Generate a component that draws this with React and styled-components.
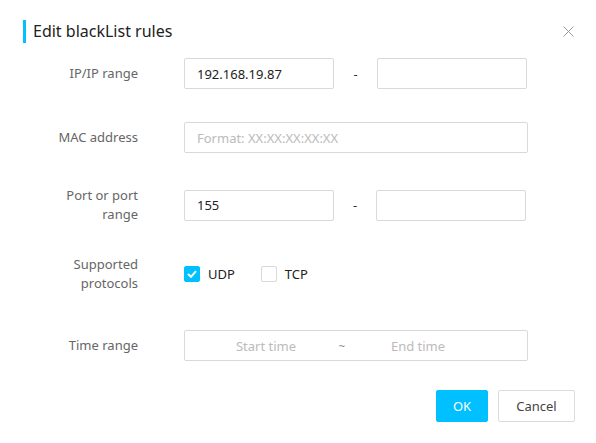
import React from "react";
import styled, { createGlobalStyle } from "styled-components";

const Global = createGlobalStyle`
  html, body { margin: 0; padding: 0; background: #fff; }
  body { font-family: "Noto Sans", "Open Sans", Arial, sans-serif; }
  * { box-sizing: border-box; }
`;

const Dialog = styled.div`
  width: 596px;
  height: 443px;
  background: #fff;
  position: relative;
  padding-top: 20px;
`;

const Header = styled.div`
  display: flex;
  align-items: center;
  justify-content: space-between;
  padding: 0 22px 0 23px;
  height: 23px;
`;

const Title = styled.h2`
  margin: 0;
  border-left: 3px solid #00c0ff;
  padding-left: 7px;
  font-size: 16px;
  font-weight: normal;
  line-height: 23px;
  color: #222;
`;

const Close = styled.button`
  border: 0;
  background: none;
  padding: 0;
  width: 12px;
  height: 12px;
  display: flex;
  align-items: center;
  justify-content: center;
  cursor: pointer;
`;

const Form = styled.div`
  display: flex;
  flex-direction: column;
`;

const Row = styled.div`
  display: grid;
  grid-template-columns: 138px 1fr;
  column-gap: 46px;
  align-items: center;
  height: 31px;
  margin-top: ${(p) => p.$top}px;
`;

const Label = styled.div`
  text-align: right;
  font-size: 13px;
  line-height: 19px;
  color: #666;
`;

const Field = styled.div`
  display: flex;
  align-items: center;
`;

const Input = styled.input`
  width: ${(p) => p.$w}px;
  height: 31px;
  border: 1px solid #d9d9d9;
  border-radius: 2px;
  padding: 0 12px;
  font-family: inherit;
  font-size: 13px;
  color: #222;
  outline: none;
  &::placeholder { color: #bbb; }
`;

const Dash = styled.span`
  width: ${(p) => p.$w}px;
  text-align: center;
  font-size: 13px;
  color: #333;
`;

const Check = styled.span`
  width: 16px;
  height: 16px;
  border-radius: 2px;
  display: inline-flex;
  align-items: center;
  justify-content: center;
  background: ${(p) => (p.$on ? "#00c0ff" : "#fff")};
  border: 1px solid ${(p) => (p.$on ? "#00c0ff" : "#d9d9d9")};
  margin-right: 8px;
`;

const CheckLabel = styled.label`
  display: inline-flex;
  align-items: center;
  font-size: 13px;
  color: #222;
  margin-right: 26px;
`;

const TimeBox = styled.div`
  width: 344px;
  height: 31px;
  border: 1px solid #d9d9d9;
  border-radius: 2px;
  display: flex;
  align-items: center;
  padding: 0 9px;
`;

const TimeInput = styled.input`
  width: 144px;
  border: 0;
  outline: none;
  text-align: center;
  font-family: inherit;
  font-size: 13px;
  color: #222;
  background: transparent;
  &::placeholder { color: #bbb; }
`;

const Tilde = styled.span`
  width: 8px;
  text-align: center;
  font-size: 11px;
  color: #888;
`;

const Footer = styled.div`
  display: flex;
  justify-content: flex-end;
  gap: 10px;
  padding-right: 21px;
  margin-top: 29px;
`;

const Button = styled.button`
  height: 32px;
  min-width: ${(p) => p.$w}px;
  border-radius: 2px;
  font-family: inherit;
  font-size: 13px;
  cursor: pointer;
  background: ${(p) => (p.$primary ? "#00c0ff" : "#fff")};
  color: ${(p) => (p.$primary ? "#fff" : "#444")};
  border: 1px solid ${(p) => (p.$primary ? "#00c0ff" : "#dcdcdc")};
`;

export default function App() {
  return (
    <>
      <Global />
      <Dialog>
        <Header>
          <Title>Edit blackList rules</Title>
          <Close aria-label="close">
            <svg width="11" height="11" viewBox="0 0 11 11">
              <path d="M0.5 0.5 L10.5 10.5 M10.5 0.5 L0.5 10.5" stroke="#999" strokeWidth="1" fill="none" />
            </svg>
          </Close>
        </Header>
        <Form>
          <Row $top={15}>
            <Label>IP/IP range</Label>
            <Field>
              <Input $w={150} defaultValue="192.168.19.87" />
              <Dash $w={43}>-</Dash>
              <Input $w={150} />
            </Field>
          </Row>
          <Row $top={33}>
            <Label>MAC address</Label>
            <Field>
              <Input $w={344} placeholder="Format: XX:XX:XX:XX:XX" />
            </Field>
          </Row>
          <Row $top={33}>
            <Label>Port or port<br />range</Label>
            <Field>
              <Input $w={150} defaultValue="155" />
              <Dash $w={42}>-</Dash>
              <Input $w={150} />
            </Field>
          </Row>
          <Row $top={38}>
            <Label>Supported<br />protocols</Label>
            <Field>
              <CheckLabel>
                <Check $on>
                  <svg width="10" height="8" viewBox="0 0 10 8">
                    <path d="M1 4 L4 6.8 L9 1.2" stroke="#fff" strokeWidth="2" fill="none" />
                  </svg>
                </Check>
                UDP
              </CheckLabel>
              <CheckLabel>
                <Check />
                TCP
              </CheckLabel>
            </Field>
          </Row>
          <Row $top={44}>
            <Label>Time range</Label>
            <Field>
              <TimeBox>
                <TimeInput placeholder="Start time" />
                <Tilde>~</Tilde>
                <TimeInput placeholder="End time" />
              </TimeBox>
            </Field>
          </Row>
        </Form>
        <Footer>
          <Button $primary $w={52}>OK</Button>
          <Button $w={77}>Cancel</Button>
        </Footer>
      </Dialog>
    </>
  );
}
